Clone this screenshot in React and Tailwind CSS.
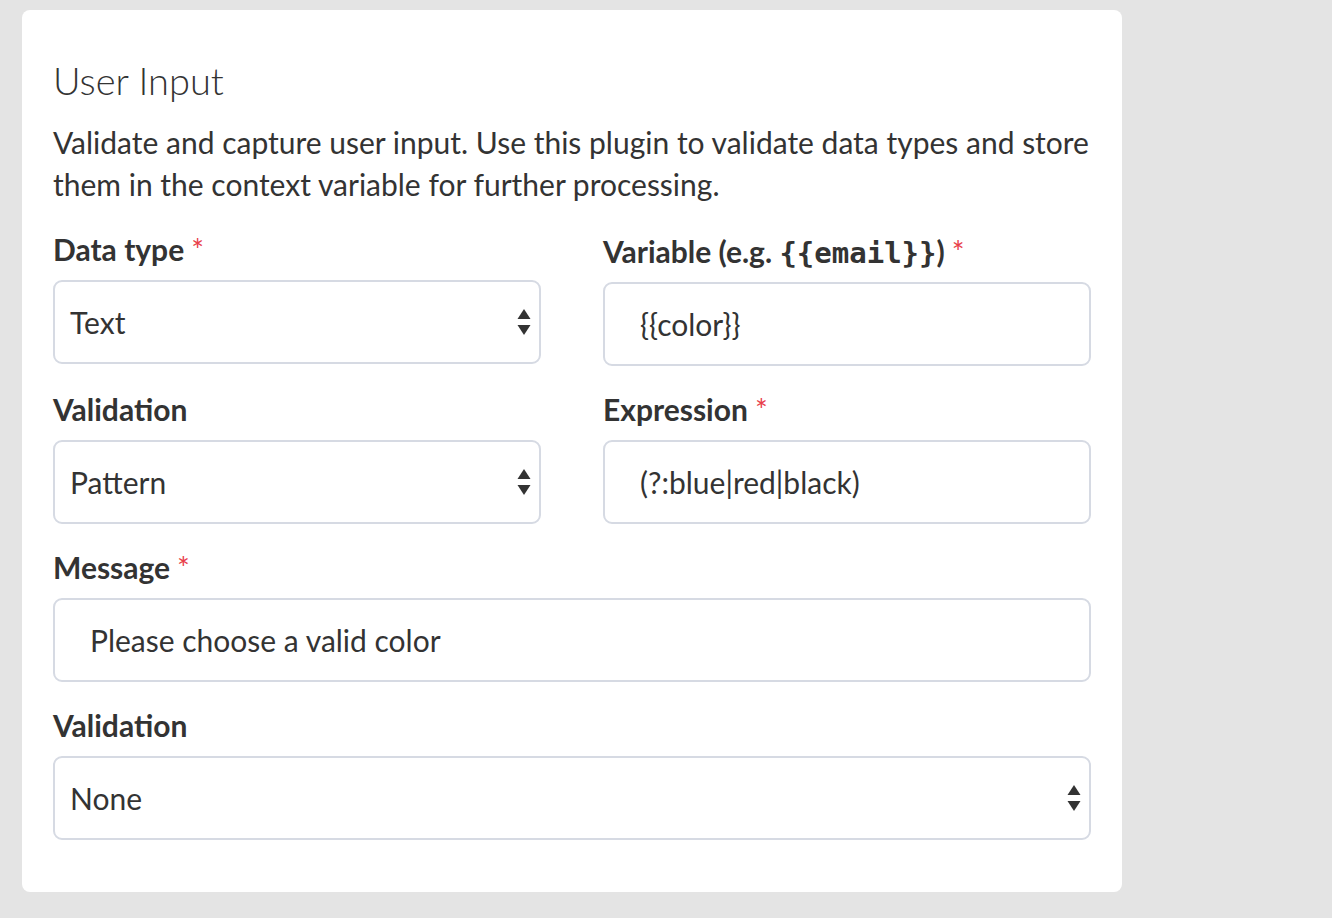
import React from 'react';

const Required = () => (
  <span className="ml-[7px] leading-none font-normal text-[#e8404a]">*</span>
);

const Label = ({ children, required }) => (
  <label className="block text-[30px] leading-[34px] font-bold text-[#333333] mb-[14px]">
    {children}
    {required && <Required />}
  </label>
);

const SelectBox = ({ value }) => (
  <div className="h-[84px] rounded-[9px] border-2 border-[#d6dae3] bg-white pl-[15px] pr-[8px] flex items-center justify-between">
    <span className="text-[30px] text-[#333333]">{value}</span>
    <svg width="14" height="28" viewBox="0 0 14 28" className="text-[#333333]">
      <path d="M7 1 L13.5 11 L0.5 11 Z" fill="currentColor" />
      <path d="M0.5 17 L13.5 17 L7 27 Z" fill="currentColor" />
    </svg>
  </div>
);

const TextBox = ({ value }) => (
  <input
    readOnly
    value={value}
    className="block w-full h-[84px] rounded-[9px] border-2 border-[#d6dae3] bg-white pl-[35px] text-[30px] text-[#333333] outline-none font-[Lato,sans-serif]"
  />
);

const App = () => {
  return (
    <div className="min-h-[918px] bg-[#e4e4e4] pl-[22px] pt-[10px] font-[Lato,sans-serif] text-[#333333]">
      <div className="w-[1100px] bg-white rounded-[8px] px-[31px] pt-[47px] pb-[52px]">
        {/* Header */}
        <h2 className="text-[38px] leading-[47px] font-light">User Input</h2>
        <p className="mt-[17px] text-[30px] leading-[42px]">
          Validate and capture user input. Use this plugin to validate data types and store
          them in the context variable for further processing.
        </p>

        {/* Fields */}
        <div className="mt-[27px] grid grid-cols-2 gap-x-[62px] gap-y-[26px]">
          <div>
            <Label required>Data type</Label>
            <SelectBox value="Text" />
          </div>
          <div>
            <label className="block text-[30px] leading-[34px] font-bold mb-[14px] pt-[2px]">
              Variable (e.g.{' '}
              <code className="font-['DejaVu_Sans_Mono',monospace] text-[29px] leading-none font-bold">{'{{email}}'}</code>)
              <Required />
            </label>
            <TextBox value="{{color}}" />
          </div>

          <div>
            <Label>Validation</Label>
            <SelectBox value="Pattern" />
          </div>
          <div>
            <Label required>Expression</Label>
            <TextBox value="(?:blue|red|black)" />
          </div>

          <div className="col-span-2">
            <Label required>Message</Label>
            <TextBox value="Please choose a valid color" />
          </div>

          <div className="col-span-2">
            <Label>Validation</Label>
            <SelectBox value="None" />
          </div>
        </div>
      </div>
    </div>
  );
};

export default App;
